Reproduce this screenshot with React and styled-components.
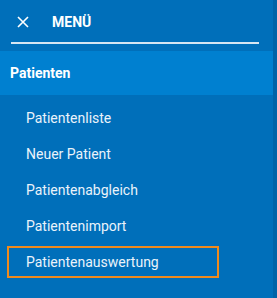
import React from "react";
import styled, { createGlobalStyle } from "styled-components";

const GlobalStyle = createGlobalStyle`
  html, body {
    margin: 0;
    padding: 0;
    background: #006fba;
  }
  body {
    font-family: Roboto, "Liberation Sans", sans-serif;
  }
`;

const Drawer = styled.nav`
  display: flex;
  width: 277px;
  height: 298px;
  background: #006fba;
  overflow: hidden;
`;

const Panel = styled.div`
  flex: 1;
  display: flex;
  flex-direction: column;
`;

const Edge = styled.div`
  width: 4px;
  background: #0063a8;
`;

const Header = styled.div`
  display: flex;
  align-items: center;
  height: 44px;
  margin: 0 14px 0 11px;
  padding: 2px 0 0 6px;
  border-bottom: 2px solid #d6e6f3;
  box-sizing: border-box;
`;

const CloseButton = styled.button`
  display: flex;
  align-items: center;
  justify-content: center;
  width: 12px;
  height: 12px;
  padding: 0;
  border: none;
  background: transparent;
  cursor: pointer;
`;

const Title = styled.span`
  margin-left: 23px;
  color: #ffffff;
  font-size: 14px;
  font-weight: 700;
`;

const Section = styled.div`
  margin-top: 7px;
  height: 44px;
  display: flex;
  align-items: center;
  padding-left: 10px;
  background: #0080d0;
  color: #ffffff;
  font-size: 14px;
  font-weight: 700;
`;

const List = styled.ul`
  list-style: none;
  margin: 7px 0 0;
  padding: 0;
  display: flex;
  flex-direction: column;
  gap: 4px;
`;

const Item = styled.li`
  display: flex;
  align-items: center;
  height: 32px;
  margin: 0 54px 0 7px;
  padding-left: 17px;
  box-sizing: border-box;
  color: #eaf3fa;
  font-size: 14px;
  border: 2px solid ${(p) => (p.$focused ? "#f08a1c" : "transparent")};
`;

const items = [
  "Patientenliste",
  "Neuer Patient",
  "Patientenabgleich",
  "Patientenimport",
  "Patientenauswertung",
];

export default function App() {
  return (
    <>
      <GlobalStyle />
      <Drawer>
        <Panel>
          <Header>
            <CloseButton aria-label="Menü schließen">
              <svg width="12" height="12" viewBox="0 0 12 12">
                <path d="M1 1 L11 11 M11 1 L1 11" stroke="#ffffff" strokeWidth="1.6" />
              </svg>
            </CloseButton>
            <Title>MENÜ</Title>
          </Header>
          <Section>Patienten</Section>
          <List>
            {items.map((label, i) => (
              <Item key={label} $focused={i === items.length - 1}>
                {label}
              </Item>
            ))}
          </List>
        </Panel>
        <Edge />
      </Drawer>
    </>
  );
}
